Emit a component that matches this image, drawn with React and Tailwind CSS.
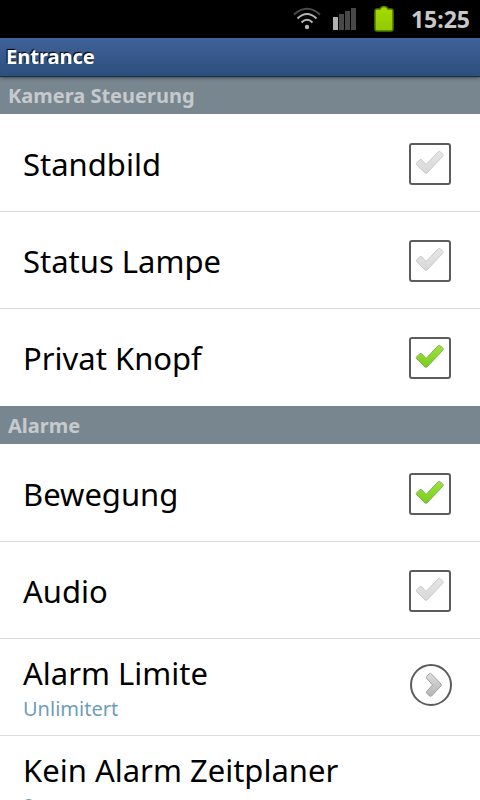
import { useState } from 'react';

const sections = [
  {
    title: 'Kamera Steuerung',
    items: [
      { id: 'still', label: 'Standbild' },
      { id: 'lamp', label: 'Status Lampe' },
      { id: 'private', label: 'Privat Knopf' },
    ],
  },
  {
    title: 'Alarme',
    items: [
      { id: 'motion', label: 'Bewegung' },
      { id: 'audio', label: 'Audio' },
      { id: 'limit', label: 'Alarm Limite', value: 'Unlimitert', more: true },
      { id: 'schedule', label: 'Kein Alarm Zeitplaner', value: '0' },
    ],
  },
];

const StatusBar = () => (
  <div className="flex h-[38px] shrink-0 items-center justify-end bg-black pr-[10px]">
    <svg viewBox="0 0 28 24" className="mr-3 h-6 w-7" fill="none" strokeWidth="2">
      <path d="M1 7.5 Q14 -4 27 7.5" stroke="#4c4c4c" />
      <path d="M4.5 11.5 Q14 2.5 23.5 11.5" stroke="#b5b5b5" />
      <path d="M8.5 15.5 Q14 10 19.5 15.5" stroke="#b5b5b5" />
      <circle cx="14" cy="20" r="2.2" fill="#b5b5b5" />
    </svg>
    <svg viewBox="0 0 24 22" className="mr-4 h-[22px] w-6">
      <rect x="0" y="9" width="5" height="13" fill="#b0b0b0" />
      <rect x="6" y="6" width="5" height="16" fill="#484848" />
      <rect x="12" y="3" width="5" height="19" fill="#484848" />
      <rect x="18" y="0" width="5" height="22" fill="#484848" />
    </svg>
    <svg viewBox="0 0 22 28" className="mr-4 h-7 w-[22px]">
      <defs>
        <linearGradient id="battery" x1="0" y1="0" x2="0" y2="1">
          <stop offset="0" stopColor="#a6dc00" />
          <stop offset="1" stopColor="#92c800" />
        </linearGradient>
      </defs>
      <path
        d="M4 4 H7 Q8 1.5 11 1.5 Q14 1.5 15 4 H18 Q20 4 20 6 V24 Q20 26 18 26 H4 Q2 26 2 24 V6 Q2 4 4 4Z"
        fill="url(#battery)"
        stroke="#4d7a00"
        strokeWidth="1.5"
      />
    </svg>
    <span className="text-[23px] leading-[38px] font-bold text-[#c8c8c8]">15:25</span>
  </div>
);

const CheckMark = ({ on }) => (
  <svg viewBox="0 0 42 42" className="pointer-events-none col-start-1 row-start-1 size-[42px]">
    <defs>
      <linearGradient id="tick-on" x1="0" y1="0" x2="0" y2="1">
        <stop offset="0" stopColor="#a0e23c" />
        <stop offset="1" stopColor="#78cf1c" />
      </linearGradient>
      <linearGradient id="tick-off" x1="0" y1="0" x2="0" y2="1">
        <stop offset="0" stopColor="#e6e6e6" />
        <stop offset="1" stopColor="#d8d8d8" />
      </linearGradient>
    </defs>
    <path
      d="M7.5 20 L11 16.5 Q12 16 13 17 L17 21.5 L29.5 8.5 Q30.5 8 31.5 9 L34 11.5 Q34.5 12.5 33.5 13.5 L18 30 Q17 30.5 16 30 L7.5 21.5 Q7 20.7 7.5 20Z"
      fill={on ? 'url(#tick-on)' : 'url(#tick-off)'}
      stroke={on ? '#7fae55' : '#cacaca'}
      strokeWidth="1"
    />
  </svg>
);

const ChevronIcon = () => (
  <svg viewBox="0 0 42 42" className="mb-1 size-[42px]">
    <defs>
      <linearGradient id="chevron" x1="0" y1="0" x2="0" y2="1">
        <stop offset="0" stopColor="#dedede" />
        <stop offset="1" stopColor="#b4b4b4" />
      </linearGradient>
    </defs>
    <circle cx="21" cy="21" r="20" fill="#fff" stroke="#5c5c5c" strokeWidth="2" />
    <path
      d="M16.5 12.5 L19.5 9.5 Q20.5 9 21.5 10 L31 20 Q31.7 21 31 22 L21.5 32 Q20.5 32.7 19.5 32 L16.5 29 Q16 28 16.5 27.5 L22.5 21 L16.5 14 Q16 13 16.5 12.5Z"
      fill="url(#chevron)"
      stroke="#a2a2a2"
      strokeWidth="1"
    />
  </svg>
);

const CheckRow = ({ item, checked, onChange }) => (
  <label htmlFor={item.id} className="flex min-h-24 items-center justify-between pt-0.5 pr-[29px] pl-[23px]">
    <span className="text-[31px] leading-10">{item.label}</span>
    <span className="grid">
      <input
        id={item.id}
        type="checkbox"
        checked={checked}
        onChange={onChange}
        className="col-start-1 row-start-1 size-[42px] appearance-none rounded-[3px] border-2 border-[#5c5c5c] bg-white"
      />
      <CheckMark on={checked} />
    </span>
  </label>
);

const LinkRow = ({ item }) => (
  <button type="button" className="flex min-h-24 w-full items-center justify-between pr-7 pl-[23px] text-left">
    <span className="flex flex-col pt-1">
      <span className="text-[31px] leading-10">{item.label}</span>
      <span className="text-[20px] leading-8 text-[#6f9db8]">{item.value}</span>
    </span>
    {item.more && <ChevronIcon />}
  </button>
);

const App = () => {
  const [checked, setChecked] = useState({ private: true, motion: true });

  const toggle = (id) => setChecked((prev) => ({ ...prev, [id]: !prev[id] }));

  return (
    <div className="flex h-screen flex-col bg-white font-['Noto_Sans','Open_Sans',sans-serif] text-black">
      <StatusBar />
      <header className="z-10 h-[38px] shrink-0 bg-linear-to-b from-[#40629a] to-[#2d4f7c] px-[6px] shadow-[0_1px_1px_#1f2f4a,0_2px_4px_#00000066]">
        <h1 className="text-[20px] leading-[38px] font-bold text-white [text-shadow:-1px_-1px_1px_#000]">Entrance</h1>
      </header>

      <main className="min-h-0 flex-1 overflow-y-auto [scrollbar-width:none]">
        {sections.map((section) => (
          <section key={section.title}>
            <h2 className="bg-[#788690] px-2 pt-0.5 text-[20px] leading-9 font-bold text-[#c6cacd]">
              {section.title}
            </h2>
            <ul className="divide-y divide-[#dcdcdc] py-px">
              {section.items.map((item) => (
                <li key={item.id}>
                  {item.value ? (
                    <LinkRow item={item} />
                  ) : (
                    <CheckRow item={item} checked={!!checked[item.id]} onChange={() => toggle(item.id)} />
                  )}
                </li>
              ))}
            </ul>
          </section>
        ))}
      </main>
    </div>
  );
};

export default App;
